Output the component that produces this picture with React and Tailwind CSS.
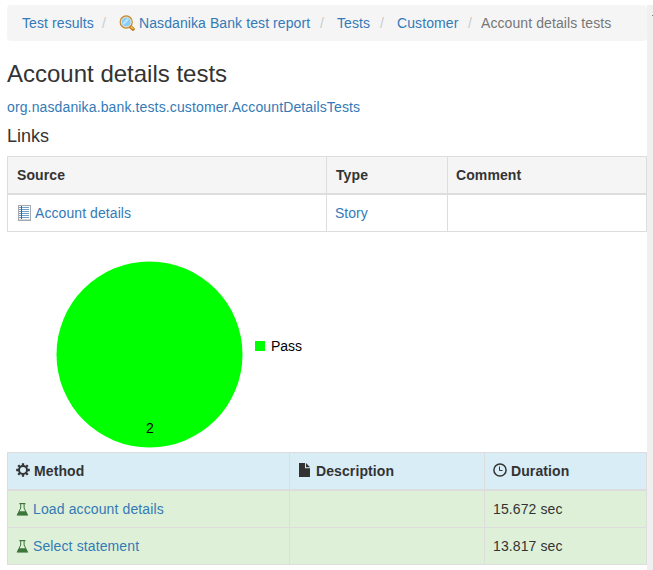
const link = "text-[#337ab7]";

function MagnifierIcon() {
  return (
    <svg width="16" height="16" viewBox="0 0 16 16" className="block shrink-0">
      <path d="M11.4 11.6l2.6 2.4" stroke="#b97a1c" strokeWidth="3.6" strokeLinecap="round" />
      <path d="M11.6 11.4l2.2 2" stroke="#f5b850" strokeWidth="1.8" strokeLinecap="round" />
      <circle cx="7.2" cy="7" r="6" fill="#86cdfb" stroke="#c9882b" strokeWidth="1.3" />
      <circle cx="7.2" cy="7" r="4.9" fill="none" stroke="#f9e6c0" strokeWidth="0.9" />
      <path d="M4.4 9.2L9 4" stroke="#bfe5ff" strokeWidth="2" />
    </svg>
  );
}

function NotebookIcon() {
  return (
    <svg width="13" height="16" viewBox="0 0 13 16" className="block shrink-0">
      <path d="M0 0h13v16H0z" fill="#a6a8ab" />
      <path d="M1 1h11v13H1z" fill="#fff" />
      <path d="M1 14h11v1H1z" fill="#d4d4d4" />
      {[2, 4, 6, 8, 10, 12].map((y) => (
        <rect key={y} x="1" y={y} width="10" height="1" fill="#6d9fca" />
      ))}
      <rect x="3" y="1" width="1" height="13" fill="#c8302c" />
    </svg>
  );
}

function GearIcon() {
  return (
    <svg width="14" height="14" viewBox="0 0 14 14" className="block shrink-0 -translate-y-px" fill="none" stroke="#333">
      <circle cx="7" cy="7" r="4" strokeWidth="2" />
      <path d="M7 .2v2.4M7 11.4v2.4M.2 7h2.4M11.4 7h2.4M2.2 2.2l1.6 1.6M10.2 10.2l1.6 1.6M11.8 2.2l-1.6 1.6M3.8 10.2l-1.6 1.6" strokeWidth="2.3" />
    </svg>
  );
}

function FileIcon() {
  return (
    <svg width="14" height="14" viewBox="0 0 14 14" className="block shrink-0 -translate-y-px" fill="#333">
      <path d="M1 0h6v5.3h5V14H1zM8 0l4 4.3H8z" />
    </svg>
  );
}

function ClockIcon() {
  return (
    <svg width="14" height="14" viewBox="0 0 14 14" className="block shrink-0 -translate-y-px" fill="none" stroke="#333">
      <circle cx="7" cy="7" r="6.1" strokeWidth="1.5" />
      <path d="M6.5 3.5v4h3" strokeWidth="1" />
    </svg>
  );
}

function FlaskIcon() {
  return (
    <svg width="13" height="13" viewBox="0 0 13 13" className="block shrink-0" fill="none" stroke="#3c763d">
      <path d="M3.4 .6h6" strokeWidth="1.2" />
      <path d="M4.7 1v4L1.5 11.7h9.8L8.1 5V1" strokeWidth="1" />
      <path d="M3 8.2h6.8l2.4 4.3H.6z" fill="#3c763d" stroke="none" />
    </svg>
  );
}

function Cell({ children, head, className = "px-2" }) {
  const Tag = head ? "th" : "td";
  return (
    <Tag
      className={`border-r border-[#ddd] py-0 text-left align-middle ${
        head ? "h-[38px] border-b-2 font-bold tracking-[0.1px]" : "h-[37px] border-b"
      } ${className}`}
    >
      {children}
    </Tag>
  );
}

const tableClass = "w-[640px] table-fixed border-separate border-spacing-0 border-l border-t border-[#ddd] leading-5";

function Methods() {
  const rows = [
    ["Load account details", "15.672 sec"],
    ["Select statement", "13.817 sec"],
  ];
  return (
    <table className={tableClass}>
      <colgroup>
        <col className="w-[282px]" />
        <col className="w-[195px]" />
        <col className="w-[162px]" />
      </colgroup>
      <thead className="bg-[#d9edf7]">
        <tr>
          <Cell head><div className="flex items-center gap-1"><GearIcon />Method</div></Cell>
          <Cell head><div className="flex items-center gap-1"><FileIcon />Description</div></Cell>
          <Cell head><div className="flex items-center gap-1"><ClockIcon />Duration</div></Cell>
        </tr>
      </thead>
      <tbody className="bg-[#dff0d8]">
        {rows.map(([name, time]) => (
          <tr key={name}>
            <Cell>
              <div className="flex items-center gap-1"><FlaskIcon /><a className={`tracking-[0.12px] ${link}`}>{name}</a></div>
            </Cell>
            <Cell />
            <Cell><span className="tracking-[0.1px]">{time}</span></Cell>
          </tr>
        ))}
      </tbody>
    </table>
  );
}

function Slash({ className = "w-[26px]" }) {
  return <span className={`pl-[9px] text-[#ccc] ${className}`}>/</span>;
}

export default function App() {
  return (
    <div className="flex h-[570px] w-[653px] overflow-hidden bg-white pt-[5px] font-['Liberation_Sans',Arial,sans-serif] text-sm text-[#333]">
      <main className="ml-[7px] w-[640px] shrink-0">
        <nav className="flex h-9 items-center whitespace-nowrap rounded bg-[#f5f5f5] pl-[15px] tracking-[0.09px]">
          <a className={`w-[71px] ${link}`}>Test results</a>
          <Slash />
          <a className={`flex w-[192px] items-center gap-1 ${link}`}><MagnifierIcon />Nasdanika Bank test report</a>
          <Slash />
          <a className={`w-[34px] ${link}`}>Tests</a>
          <Slash />
          <a className={`w-[62px] ${link}`}>Customer</a>
          <Slash className="w-[22px]" />
          <span className="text-[#777]">Account details tests</span>
        </nav>
        <h1 className="mt-5 text-2xl leading-[26px]">Account details tests</h1>
        <p className={`mt-[10px] leading-5 tracking-[0.13px] ${link}`}>org.nasdanika.bank.tests.customer.AccountDetailsTests</p>
        <h2 className="mb-[10px] mt-[9px] text-lg leading-5">Links</h2>
        <table className={tableClass}>
          <colgroup>
            <col className="w-[319px]" />
            <col className="w-[121px]" />
            <col className="w-[199px]" />
          </colgroup>
          <thead className="bg-[#f5f5f5]">
            <tr>
              <Cell head className="pl-[9px]">Source</Cell>
              <Cell head className="pl-[9px]">Type</Cell>
              <Cell head>Comment</Cell>
            </tr>
          </thead>
          <tbody>
            <tr>
              <Cell>
                <div className="flex items-center gap-1 pl-[2px]"><NotebookIcon /><a className={`tracking-[0.08px] ${link}`}>Account details</a></div>
              </Cell>
              <Cell><a className={link}>Story</a></Cell>
              <Cell />
            </tr>
          </tbody>
        </table>
        <svg width="640" height="220" viewBox="7 232 640 220" className="block" fill="#000" fontSize="14">
          <circle cx="149.5" cy="354.5" r="93" fill="#0f0" />
          <text x="150" y="433" textAnchor="middle">2</text>
          <path d="M255 341h10v10h-10z" fill="#0f0" />
          <text x="271" y="351">Pass</text>
        </svg>
        <Methods />
      </main>
      <aside className="h-[565px] flex-1 bg-[#f0f0f0] pt-[10px]">
        <div className="ml-auto h-px w-px bg-[#777]" />
      </aside>
    </div>
  );
}
